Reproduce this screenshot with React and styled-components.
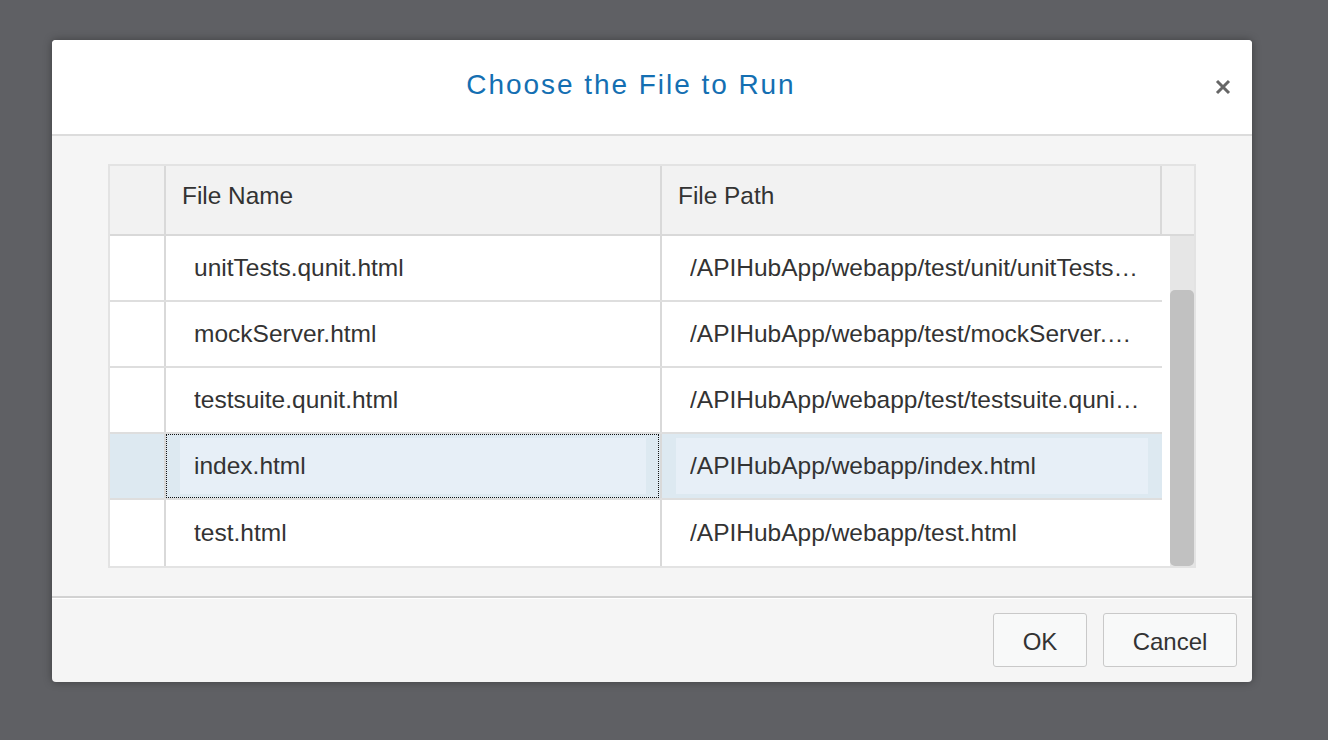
import React from "react";
import styled, { createGlobalStyle, css } from "styled-components";

const Global = createGlobalStyle`
  html, body { margin: 0; padding: 0; }
  body {
    background: #5f6064;
    font-family: "Liberation Sans", Arial, Helvetica, sans-serif;
    -webkit-font-smoothing: antialiased;
  }
  * { box-sizing: border-box; }
`;

const Page = styled.div`
  height: 740px;
  padding: 40px 0 0 52px;
`;

const Dialog = styled.div`
  width: 1200px;
  height: 642px;
  background: #f5f5f5;
  border-radius: 4px;
  box-shadow: 0 0 8px rgba(0, 0, 0, 0.35);
  display: flex;
  flex-direction: column;
  overflow: hidden;
`;

const Header = styled.div`
  height: 96px;
  background: #ffffff;
  border-bottom: 2px solid #dcdcdc;
  display: flex;
  align-items: center;
`;

const Title = styled.h1`
  flex: 1;
  margin: 0;
  padding-bottom: 5px;
  text-align: center;
  font-size: 28px;
  font-weight: normal;
  letter-spacing: 1.95px;
  color: #146fb2;
`;

const CloseButton = styled.button`
  width: 16px;
  height: 16px;
  margin: 0 21px 0 5px;
  padding: 0;
  border: none;
  background: none;
  display: flex;
  cursor: pointer;
`;

const Content = styled.div`
  flex: 1;
  padding: 28px 56px;
`;

const Table = styled.div`
  border: 2px solid #e3e3e3;
  background: #ffffff;
  display: flex;
  flex-direction: column;
`;

const HeadRow = styled.div`
  display: flex;
  height: 70px;
  background: #f2f2f2;
  border-bottom: 2px solid #d9d9d9;
`;

const colWidths = [56, 496, 500, 32];

const HeadCell = styled.div`
  width: ${(p) => colWidths[p.$col]}px;
  flex: none;
  border-right: ${(p) => (p.$col < 3 ? "2px solid #d9d9d9" : "none")};
  display: flex;
  align-items: center;
  padding: 0 0 9px 16px;
  font-size: 24.4px;
  color: #333333;
`;

const Body = styled.div`
  display: flex;
  height: 330px;
`;

const Rows = styled.div`
  width: 1052px;
  display: flex;
  flex-direction: column;
`;

const Row = styled.div`
  display: flex;
  height: 66px;
  border-bottom: ${(p) => (p.$last ? "none" : "2px solid #dedede")};
  background: ${(p) => (p.$selected ? "#dde9f1" : "#ffffff")};
`;

const Cell = styled.div`
  width: ${(p) => colWidths[p.$col]}px;
  flex: none;
  position: relative;
  border-right: ${(p) => (p.$col < 2 ? "2px solid #d9d9d9" : "none")};
  display: flex;
  align-items: stretch;
  padding: ${(p) => (p.$selected && p.$col > 0 ? "4px 14px" : "0")};
  ${(p) =>
    p.$focused &&
    css`
      &::after {
        content: "";
        position: absolute;
        left: 0;
        top: 0;
        right: 1px;
        bottom: 0;
        border: 1px dotted #111;
        pointer-events: none;
      }
    `}
`;

const CellText = styled.div`
  flex: 1;
  min-width: 0;
  display: flex;
  align-items: center;
  background: ${(p) => (p.$selected ? "#e7eff7" : "transparent")};
  padding: ${(p) => (p.$selected ? "0 6px 0 14px" : "0 22px 0 28px")};
  font-size: 24.5px;
  color: #333333;
  & > span {
    overflow: hidden;
    white-space: nowrap;
    text-overflow: ellipsis;
  }
`;

const ScrollColumn = styled.div`
  width: 32px;
  flex: none;
  padding-left: 8px;
  background: #ffffff;
  display: flex;
`;

const Track = styled.div`
  flex: 1;
  background: #e6e6e6;
  display: flex;
  flex-direction: column;
  justify-content: flex-end;
`;

const Thumb = styled.div`
  height: 276px;
  background: #c1c1c1;
  border-radius: 5px;
`;

const Footer = styled.div`
  height: 86px;
  border-top: 2px solid #d2d2d2;
  box-shadow: inset 0 1px 0 #ffffff;
  display: flex;
  justify-content: flex-end;
  align-items: flex-start;
  gap: 16px;
  padding: 15px 15px 0 0;
`;

const Button = styled.button`
  width: ${(p) => p.$w}px;
  height: 54px;
  padding: 3px 0 0;
  border: 1px solid #c9c9c9;
  border-radius: 3px;
  background: #f8f9f9;
  font-family: "Liberation Sans", Arial, sans-serif;
  font-size: 24px;
  color: #333333;
  cursor: pointer;
`;

const files = [
  { name: "unitTests.qunit.html", path: "/APIHubApp/webapp/test/unit/unitTests.qunit.html" },
  { name: "mockServer.html", path: "/APIHubApp/webapp/test/mockServer.html" },
  { name: "testsuite.qunit.html", path: "/APIHubApp/webapp/test/testsuite.qunit.html" },
  { name: "index.html", path: "/APIHubApp/webapp/index.html", selected: true },
  { name: "test.html", path: "/APIHubApp/webapp/test.html" },
];

export default function App() {
  return (
    <>
      <Global />
      <Page>
        <Dialog>
          <Header>
            <Title>Choose the File to Run</Title>
            <CloseButton aria-label="Close">
              <svg width="16" height="16" viewBox="0 0 16 16">
                <path d="M2 2 L14 14 M14 2 L2 14" stroke="#666" strokeWidth="3" strokeLinecap="butt" />
              </svg>
            </CloseButton>
          </Header>
          <Content>
            <Table>
              <HeadRow>
                <HeadCell $col={0} />
                <HeadCell $col={1}>File Name</HeadCell>
                <HeadCell $col={2}>File Path</HeadCell>
                <HeadCell $col={3} />
              </HeadRow>
              <Body>
                <Rows>
                  {files.map((f, i) => (
                    <Row key={f.name} $selected={f.selected} $last={i === files.length - 1}>
                      <Cell $col={0} $selected={f.selected} />
                      <Cell $col={1} $selected={f.selected} $focused={f.selected}>
                        <CellText $selected={f.selected}>
                          <span>{f.name}</span>
                        </CellText>
                      </Cell>
                      <Cell $col={2} $selected={f.selected}>
                        <CellText $selected={f.selected}>
                          <span>{f.path}</span>
                        </CellText>
                      </Cell>
                    </Row>
                  ))}
                </Rows>
                <ScrollColumn>
                  <Track>
                    <Thumb />
                  </Track>
                </ScrollColumn>
              </Body>
            </Table>
          </Content>
          <Footer>
            <Button $w={94}>OK</Button>
            <Button $w={134}>Cancel</Button>
          </Footer>
        </Dialog>
      </Page>
    </>
  );
}
